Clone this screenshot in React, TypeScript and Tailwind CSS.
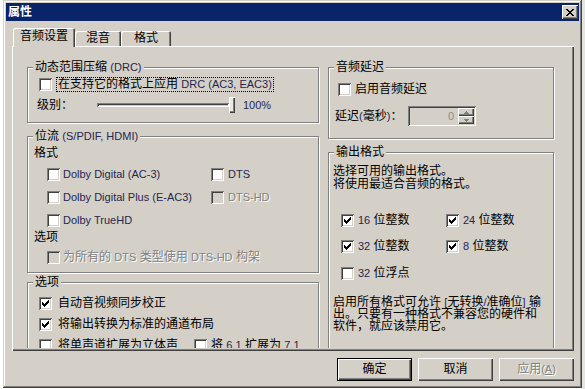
import React from 'react';

// classic 3D edges
const sunken = 'shadow-[inset_1px_1px_#808080,inset_-1px_-1px_#ffffff,inset_2px_2px_#404040,inset_-2px_-2px_#d4d0c8]';
const raised = 'shadow-[inset_1px_1px_#ffffff,inset_-1px_-1px_#404040,inset_-2px_-2px_#808080]';
const dim = 'text-[#808080] [text-shadow:1px_1px_0_#ffffff]';

const CHECK = ['......#', '.....##', '#...###', '##.###.', '#####..', '.###...', '..#....'];
const CLOSE = ['##....##', '.##..##.', '..####..', '...##...', '..####..', '.##..##.', '##....##'];
const UP = ['..#..', '.###.', '#####'];
const DOWN = ['#####', '.###.', '..#..'];

function Pixels({ rows, color }: { rows: string[]; color: string }) {
  const w = rows[0].length;
  const h = rows.length;
  return (
    <svg width={w} height={h} viewBox={`0 0 ${w} ${h}`} shapeRendering="crispEdges">
      {rows.flatMap((r, y) =>
        r.split('').map((c, x) => (c === '#' ? <rect key={`${x}-${y}`} x={x} y={y} width="1" height="1" fill={color} /> : null))
      )}
    </svg>
  );
}

function L({ children, off }: { children: React.ReactNode; off?: boolean }) {
  return (
    <span className={`font-['Liberation_Sans',sans-serif] text-[11px] ${off ? '' : 'text-[#26264f]'}`}>{children}</span>
  );
}

function Box({ on, off }: { on?: boolean; off?: boolean }) {
  return (
    <span className={`w-[13px] h-[13px] shrink-0 flex items-center justify-center ${sunken} ${off ? 'bg-[#d4d0c8]' : 'bg-white'}`}>
      {on && <Pixels rows={CHECK} color="#000000" />}
    </span>
  );
}

function Check({ on, off, gap, children }: { on?: boolean; off?: boolean; gap: string; children: React.ReactNode }) {
  return (
    <div className="flex items-center h-[15px] whitespace-nowrap">
      <Box on={on} off={off} />
      <span className={`${gap} ${off ? dim : ''}`}>{children}</span>
    </div>
  );
}

function Group({ title, className, children }: { title: React.ReactNode; className: string; children?: React.ReactNode }) {
  return (
    <div className={`relative shrink-0 border border-[#808080] shadow-[inset_1px_1px_#ffffff,1px_1px_#ffffff] ${className}`}>
      <span className="absolute left-[5px] top-[-7px] px-[2px] bg-[#d4d0c8] whitespace-nowrap">{title}</span>
      {children}
    </div>
  );
}

export default function App() {
  return (
    <div className="w-[585px] h-[389px] flex overflow-hidden bg-white font-['Liberation_Sans','Noto_Sans_CJK_SC',sans-serif] text-[12px] leading-[13px] text-black">
      <div className="w-[3px] shrink-0 bg-white" />

      {/* dialog */}
      <div className="w-[579px] h-[388px] shrink-0 bg-[#d4d0c8] p-[3px] flex flex-col shadow-[inset_-1px_-1px_#404040,inset_1px_1px_#d4d0c8,inset_-2px_-2px_#808080,inset_2px_2px_#ffffff]">
        <div className="h-[18px] shrink-0 bg-[#0a246a] flex items-center justify-between pl-[2px] pr-[1px]">
          <span className="text-white font-bold">属性</span>
          <span className={`w-[16px] h-[14px] bg-[#d4d0c8] flex items-center justify-center ${raised}`}>
            <Pixels rows={CLOSE} color="#000000" />
          </span>
        </div>

        {/* tabs */}
        <div className="mt-[7px] h-[18px] shrink-0 flex items-end ml-[7px]">
          <div className="relative z-10 -mb-px h-[19px] w-[62px] pb-[2px] flex items-center justify-center bg-[#d4d0c8] rounded-tl-[2px] rounded-tr-[2px] shadow-[inset_1px_1px_#ffffff,inset_-1px_0_#404040,inset_-2px_0_#808080]">
            音频设置
          </div>
          <div className="h-[15px] w-[46px] flex items-center justify-center rounded-tl-[2px] rounded-tr-[2px] shadow-[inset_1px_1px_#ffffff,inset_-1px_0_#404040,inset_-2px_0_#808080]">
            混音
          </div>
          <div className="h-[15px] w-[50px] flex items-center justify-center rounded-tl-[2px] rounded-tr-[2px] shadow-[inset_1px_1px_#ffffff,inset_-1px_0_#404040,inset_-2px_0_#808080]">
            格式
          </div>
        </div>

        {/* tab panel */}
        <div className="ml-[6px] w-[562px] h-[305px] shrink-0 pt-px pl-px pr-[2px] pb-[3px] shadow-[inset_1px_1px_#ffffff,inset_-1px_-1px_#404040,inset_-2px_-2px_#808080]">
          <div className="h-full overflow-hidden flex items-start gap-[9px] pl-[14px] pt-[20px]">
            {/* left column */}
            <div className="w-[292px] shrink-0 flex flex-col">
              <Group title={<>动态范围压缩 <L>(DRC)</L></>} className="h-[56px]">
                <div className="mt-[9px] pl-[11px] flex items-center h-[15px] whitespace-nowrap">
                  <Box />
                  <span className="ml-[4px] h-[15px] flex items-center border border-dotted border-black px-px">
                    在支持它的格式上应用&nbsp;<L>DRC (AC3, EAC3)</L>
                  </span>
                </div>
                <div className="mt-[5px] pl-[9px] h-[16px] flex items-center">
                  <span className="w-[60px] shrink-0">级别：</span>
                  <span className={`w-[132px] h-[4px] shrink-0 ${sunken}`} />
                  <span className={`w-[6px] h-[16px] shrink-0 bg-[#ebe9e5] ${raised}`} />
                  <span className="ml-[8px]"><L>100%</L></span>
                </div>
              </Group>

              <Group title={<>位流 <L>(S/PDIF, HDMI)</L></>} className="mt-[13px] h-[137px]">
                <div className="mt-[10px] pl-[6px]">格式</div>
                <div className="mt-[7px] pl-[19px] flex flex-col gap-[8px]">
                  <div className="flex">
                    <div className="w-[164px]"><Check gap="ml-[3px]"><L>Dolby Digital (AC-3)</L></Check></div>
                    <Check gap="ml-[4px]"><L>DTS</L></Check>
                  </div>
                  <div className="flex">
                    <div className="w-[164px]"><Check gap="ml-[3px]"><L>Dolby Digital Plus (E-AC3)</L></Check></div>
                    <Check off gap="ml-[4px]"><L off>DTS-HD</L></Check>
                  </div>
                  <Check gap="ml-[3px]"><L>Dolby TrueHD</L></Check>
                </div>
                <div className="mt-[3px] pl-[6px]">选项</div>
                <div className="mt-[6px] pl-[19px]">
                  <Check off gap="ml-[3px]">为所有的 <L off>DTS</L> 类型使用 <L off>DTS-HD</L> 构架</Check>
                </div>
              </Group>

              <Group title="选项" className="mt-[9px] h-[100px]">
                <div className="mt-[13px] pl-[11px] flex flex-col gap-[6px]">
                  <Check on gap="ml-[6px]">自动音视频同步校正</Check>
                  <Check on gap="ml-[6px]">将输出转换为标准的通道布局</Check>
                  <div className="flex">
                    <div className="w-[155px]"><Check gap="ml-[6px]">将单声道扩展为立体声</Check></div>
                    <Check gap="ml-[4px]">将 <L>6.1</L> 扩展为 <L>7.1</L></Check>
                  </div>
                </div>
              </Group>
            </div>

            {/* right column */}
            <div className="w-[226px] shrink-0 flex flex-col">
              <Group title="音频延迟" className="h-[72px]">
                <div className="mt-[14px] pl-[9px]">
                  <Check gap="ml-[4px]">启用音频延迟</Check>
                </div>
                <div className="mt-[9px] pl-[6px] flex items-center">
                  <span className="w-[73px] shrink-0">延迟<L>(</L>毫秒<L>)</L>：</span>
                  <div className={`w-[68px] h-[20px] shrink-0 flex p-[2px] bg-[#d4d0c8] ${sunken}`}>
                    <div className="flex-1 flex items-center justify-end pr-[4px]">
                      <span className="font-['Liberation_Sans',sans-serif] text-[11px] text-[#8a8a8a]">0</span>
                    </div>
                    <div className="w-[16px] flex flex-col">
                      <div className={`h-[8px] flex items-center justify-center ${raised}`}><Pixels rows={UP} color="#808080" /></div>
                      <div className={`h-[8px] flex items-center justify-center ${raised}`}><Pixels rows={DOWN} color="#808080" /></div>
                    </div>
                  </div>
                </div>
              </Group>

              <Group title="输出格式" className="mt-[13px] h-[220px]">
                <div className="mt-[12px] pl-[4px]">
                  <div>选择可用的输出格式。</div>
                  <div>将使用最适合音频的格式。</div>
                </div>
                <div className="mt-[22px] pl-[12px] flex flex-col gap-[11px]">
                  <div className="flex">
                    <div className="w-[105px]"><Check on gap="ml-[4px]"><L>16</L> 位整数</Check></div>
                    <Check on gap="ml-[4px]"><L>24</L> 位整数</Check>
                  </div>
                  <div className="flex">
                    <div className="w-[105px]"><Check on gap="ml-[4px]"><L>32</L> 位整数</Check></div>
                    <Check on gap="ml-[4px]"><L>8</L> 位整数</Check>
                  </div>
                  <div className="mt-px">
                    <Check gap="ml-[4px]"><L>32</L> 位浮点</Check>
                  </div>
                </div>
                <div className="mt-[15px] pl-[4px] leading-[12px] whitespace-nowrap">
                  <div>启用所有格式可允许 <L>[</L>无转换<L>/</L>准确位<L>]</L> 输</div>
                  <div>出。只要有一种格式不兼容您的硬件和</div>
                  <div>软件，就应该禁用它。</div>
                </div>
              </Group>
            </div>
          </div>
        </div>

        {/* buttons */}
        <div className="mt-[7px] ml-[6px] w-[562px] flex justify-end gap-[6px]">
          <button className="w-[75px] h-[23px] border border-black bg-[#d4d0c8] flex items-center justify-center shadow-[inset_1px_1px_#ffffff,inset_-1px_-1px_#404040,inset_-2px_-2px_#808080]">
            确定
          </button>
          <button className={`w-[75px] h-[23px] bg-[#d4d0c8] flex items-center justify-center ${raised}`}>取消</button>
          <button className={`w-[75px] h-[23px] bg-[#d4d0c8] flex items-center justify-center ${raised} ${dim}`}>
            应用 <L off>(<u>A</u>)</L>
          </button>
        </div>
      </div>

      <div className="flex-1 bg-[#e6e4e0]" />
    </div>
  );
}
